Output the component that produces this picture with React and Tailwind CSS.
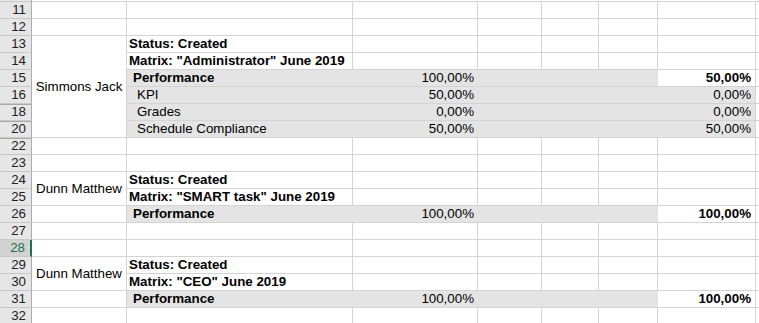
const ROWS = [
  { n: 11 },
  { n: 12 },
  { n: 13, name: 'Simmons Jack', span: 6, text: 'Status: Created' },
  { n: 14, text: 'Matrix: "Administrator" June 2019' },
  { n: 15, kind: 'perf', label: 'Performance', d: '100,00%', h: '50,00%' },
  { n: 16, kind: 'sub', label: 'KPI', d: '50,00%', h: '0,00%' },
  { n: 18, hid: true, kind: 'sub', label: 'Grades', d: '0,00%', h: '0,00%' },
  { n: 20, hid: true, kind: 'sub', label: 'Schedule Compliance', d: '50,00%', h: '50,00%' },
  { n: 22, hid: true },
  { n: 23 },
  { n: 24, name: 'Dunn Matthew', span: 2, text: 'Status: Created' },
  { n: 25, text: 'Matrix: "SMART task" June 2019' },
  { n: 26, kind: 'perf', label: 'Performance', d: '100,00%', h: '100,00%' },
  { n: 27 },
  { n: 28, sel: true },
  { n: 29, name: 'Dunn Matthew', span: 2, text: 'Status: Created' },
  { n: 30, text: 'Matrix: "CEO" June 2019' },
  { n: 31, kind: 'perf', label: 'Performance', d: '100,00%', h: '100,00%' },
  { n: 32 },
];

const line = 'border-[#d4d4d4]';
const fill = 'bg-[#e4e4e4]';

function RowHeader({ n, sel, hid }) {
  return (
    <div
      className={`col-start-1 flex items-center justify-end pr-[5px] border-b border-b-[#c8c8c8] ${
        sel
          ? 'bg-[#d2d2d2] text-[#217346] border-r-2 border-r-[#217346]'
          : 'bg-[#e6e6e6] text-[#222] border-r border-r-[#ababab]'
      } ${hid ? 'shadow-[inset_0_1px_0_#a9a9a9]' : ''}`}
    >
      {n}
    </div>
  );
}

function Row({ r, coveredB }) {
  const cells = [<RowHeader key="h" n={r.n} sel={r.sel} hid={r.hid} />];

  if (r.name) {
    cells.push(
      <div
        key="b"
        className={`col-start-2 ${r.span === 6 ? 'row-span-6' : 'row-span-2'} flex items-center justify-center border-r border-b ${line}`}
      >
        {r.name}
      </div>
    );
  } else if (!coveredB) {
    cells.push(<div key="b" className={`col-start-2 border-r border-b ${line}`} />);
  }

  if (r.kind === 'perf' || r.kind === 'sub') {
    const sub = r.kind === 'sub';
    cells.push(
      <div key="c" className={`col-start-3 ${fill} border-b ${line} whitespace-nowrap ${sub ? 'pl-[10px]' : 'pl-[6px] font-bold'}`}>
        {r.label}
      </div>,
      <div key="d" className={`col-start-4 ${fill} border-b ${line} text-right pr-[4px]`}>
        {r.d}
      </div>,
      <div key="e" className={`col-start-5 ${fill} border-b ${line}`} />,
      <div key="f" className={`col-start-6 ${fill} border-b ${line}`} />,
      <div key="g" className={`col-start-7 ${fill} border-b ${line}`} />,
      <div
        key="hh"
        className={`col-start-8 border-r border-b ${line} text-right pr-[4px] ${sub ? fill : 'bg-white font-bold'}`}
      >
        {r.h}
      </div>
    );
  } else {
    cells.push(
      <div key="c" className={`col-start-3 border-r border-b ${line} whitespace-nowrap pl-[2px] font-bold`}>
        {r.text}
      </div>,
      <div key="d" className={`col-start-4 border-r border-b ${line}`} />,
      <div key="e" className={`col-start-5 border-r border-b ${line}`} />,
      <div key="f" className={`col-start-6 border-r border-b ${line}`} />,
      <div key="g" className={`col-start-7 border-r border-b ${line}`} />,
      <div key="hh" className={`col-start-8 border-r border-b ${line}`} />
    );
  }
  cells.push(<div key="i" className={`col-start-9 border-b ${line}`} />);
  return cells;
}

export default function App() {
  let cover = 0;
  const rows = ROWS.map((r) => {
    const covered = cover > 0;
    if (cover > 0) cover -= 1;
    if (r.name) cover = r.span - 1;
    return <Row key={r.n} r={r} coveredB={covered} />;
  });

  return (
    <div
      className="w-[759px] h-[323px] overflow-hidden bg-white text-black text-[13.33px] leading-[16px]"
      style={{ fontFamily: '"Liberation Sans", Arial, sans-serif' }}
    >
      <div className="grid grid-cols-[32px_95px_226px_125px_64px_57px_59px_98px_1fr] h-[2px]">
        <div className="bg-[#e6e6e6] border-r border-r-[#ababab] border-b border-b-[#c8c8c8]" />
        <div className="col-span-8 border-b border-[#d4d4d4]" />
      </div>
      <div className="grid grid-cols-[32px_95px_226px_125px_64px_57px_59px_98px_1fr] auto-rows-[17px]">
        {rows}
      </div>
    </div>
  );
}
